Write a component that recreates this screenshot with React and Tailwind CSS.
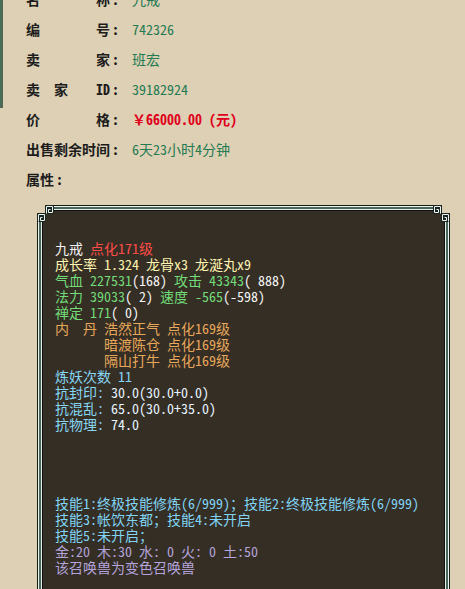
import React from "react";

const Meander = ({ x, y }) => (
  <g transform={`translate(${x} ${y})`}>
    <rect x="0" y="0" width="9" height="9" fill="#1b2622" />
    <path d="M1.5 8.5 V1.5 H7.5 V7.5 H3.5 V4.5 H5.5" fill="none" stroke="#eef4ee" strokeWidth="1" />
  </g>
);

const Corner = ({ className, flip }) => (
  <svg
    width="18"
    height="18"
    viewBox="0 0 18 18"
    className={`absolute ${className}`}
    style={{ transform: flip }}
  >
    <rect x="0" y="0" width="8" height="8" fill="#ddd0b4" />
    <Meander x={8} y={0} />
    <Meander x={0} y={8} />
  </svg>
);

const Row = ({ label, children, plain }) => (
  <div className="flex items-center h-[30px]">
    <div className="flex w-[106px] font-bold text-[#1c1c1c]">
      {plain ? (
        <span>{label}</span>
      ) : (
        <span className="flex w-[84px] justify-between">{label}</span>
      )}
      <span className="ml-[2px]">:</span>
    </div>
    <div className="text-[#237a52]">{children}</div>
  </div>
);

const Line = ({ children, className = "" }) => (
  <div className={`h-[16px] leading-[16px] whitespace-pre ${className}`}>{children}</div>
);

export default function App() {
  return (
    <div
      className="relative w-[465px] h-[589px] overflow-hidden bg-[#ddd0b4] text-[14px]"
      style={{ fontFamily: '"Noto Sans Mono CJK SC", "Noto Sans CJK SC", "Liberation Mono", monospace' }}
    >
      <div className="absolute left-0 top-0 w-[3px] h-[108px] bg-[#4c6a58]" />
      <div className="pl-[26px] -mt-[16px]">
        <Row label={<><span>名</span><span>称</span></>}>九戒</Row>
        <Row label={<><span>编</span><span>号</span></>}>742326</Row>
        <Row label={<><span>卖</span><span>家</span></>}>班宏</Row>
        <Row label={<><span>卖&nbsp;&nbsp;家</span><span>ID</span></>}>39182924</Row>
        <Row label={<><span>价</span><span>格</span></>}>
          <span className="font-bold text-[#e0001c]">￥66000.00 (元)</span>
        </Row>
        <Row plain label="出售剩余时间">6天23小时4分钟</Row>
        <Row plain label="属性">{""}</Row>
      </div>

      <div className="relative ml-[37px] mt-[11px] w-[413px] h-[420px] border border-[#141c18] bg-[#eef4ee] p-[1px]">
        <div className="h-full border-2 border-[#48665a] bg-[#e6eee8] p-[1px]">
          <div className="h-full border border-[#101010] bg-[#352e25] pl-[12px] pt-[29px] text-[#f0f0f0]">
            <Line>
              九戒 <span className="text-[#ff4d48]">点化171级</span>
            </Line>
            <Line className="text-[#fff4b0]">成长率 1.324 龙骨x3 龙涎丸x9</Line>
            <Line className="text-[#72dc78]">
              气血 227531<span className="text-[#f4f4f4]">(168)</span> 攻击 43343<span className="text-[#f4f4f4]">( 888)</span>
            </Line>
            <Line className="text-[#72dc78]">
              法力 39033<span className="text-[#f4f4f4]">( 2)</span> 速度 -565<span className="text-[#f4f4f4]">(-598)</span>
            </Line>
            <Line className="text-[#72dc78]">
              禅定 171<span className="text-[#f4f4f4]">( 0)</span>
            </Line>
            <Line className="text-[#e8a85a]">内  丹 浩然正气 点化169级</Line>
            <Line className="text-[#e8a85a]">       暗渡陈仓 点化169级</Line>
            <Line className="text-[#e8a85a]">       隔山打牛 点化169级</Line>
            <Line className="text-[#86d6f4]">炼妖次数 11</Line>
            <Line className="text-[#86d6f4]">
              抗封印: <span className="text-[#e6f4ff]">30.0(30.0+0.0)</span>
            </Line>
            <Line className="text-[#86d6f4]">
              抗混乱: <span className="text-[#e6f4ff]">65.0(30.0+35.0)</span>
            </Line>
            <Line className="text-[#86d6f4]">
              抗物理: <span className="text-[#e6f4ff]">74.0</span>
            </Line>
            <div className="mt-[63px]">
              <Line className="text-[#80d4f4]">技能1:终极技能修炼(6/999)；技能2:终极技能修炼(6/999)</Line>
              <Line className="text-[#80d4f4]">技能3:帐饮东都；技能4:未开启</Line>
              <Line className="text-[#80d4f4]">技能5:未开启；</Line>
              <Line className="text-[#b4a4dc]">金:20 木:30 水: 0 火: 0 土:50</Line>
              <Line className="text-[#b4a4dc]">该召唤兽为变色召唤兽</Line>
            </div>
          </div>
        </div>
        <Corner className="-left-[1px] -top-[1px]" />
        <Corner className="-right-[1px] -top-[1px]" flip="scaleX(-1)" />
      </div>
    </div>
  );
}
